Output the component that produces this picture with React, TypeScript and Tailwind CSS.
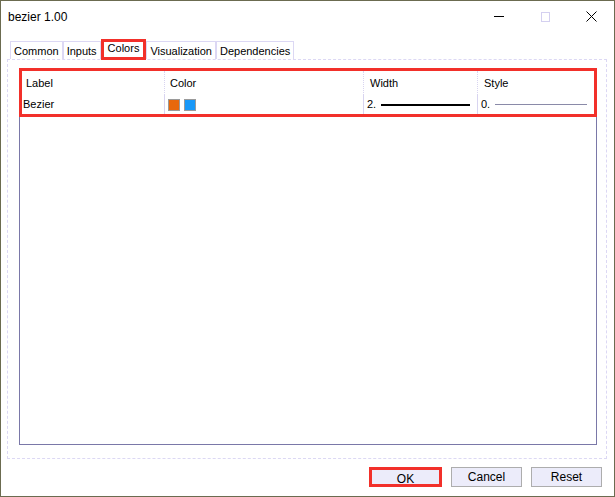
import { useState } from "react";

const tabs = ["Common", "Inputs", "Colors", "Visualization", "Dependencies"];

function TitleBar() {
  return (
    <div className="flex h-[31px] items-center pl-[7px] text-[12px] text-black">
      <span>bezier 1.00</span>
      <div className="ml-auto flex h-full items-center">
        <div className="flex w-[46px] justify-center">
          <div className="h-px w-[10px] bg-black" />
        </div>
        <div className="flex w-[46px] justify-center">
          <div className="h-[10px] w-[9px] border border-[#d4d0f0]" />
        </div>
        <div className="flex w-[46px] justify-center">
          <svg width="11" height="11" viewBox="0 0 11 11">
            <path d="M0.5 0.5 L10.5 10.5 M10.5 0.5 L0.5 10.5" stroke="#000" strokeWidth="1" />
          </svg>
        </div>
      </div>
    </div>
  );
}

function Tabs({ active, onPick }: { active: string; onPick: (t: string) => void }) {
  return (
    <div className="relative z-10 ml-[9px] flex h-[21px] items-end text-[11px]">
      {tabs.map((t) =>
        t === active ? (
          <button
            key={t}
            onClick={() => onPick(t)}
            className="-mb-px h-[21px] border-[3px] border-[#f2302a] bg-white px-[4px] pb-[3px] leading-[13px]"
          >
            {t}
          </button>
        ) : (
          <button
            key={t}
            onClick={() => onPick(t)}
            className="h-[18px] border border-b-0 border-[#dcd8f4] bg-white px-[3px] leading-[16px]"
          >
            {t}
          </button>
        )
      )}
    </div>
  );
}

function ColorsTable() {
  return (
    <div className="h-[376px] border border-[#7a78a8] bg-white">
      <div className="-mx-px -mt-[2px] border-[3px] border-[#f2302a]">
        <div className="flex h-[24px] items-center text-[11px]">
          <div className="w-[142px] pl-[4px]">Label</div>
          <div className="flex h-full w-[199px] items-center border-l border-dotted border-[#d8d4f0] pl-[5px]">Color</div>
          <div className="flex h-full w-[114px] items-center border-l border-dotted border-[#d8d4f0] pl-[6px]">Width</div>
          <div className="flex h-full flex-1 items-center border-l border-dotted border-[#d8d4f0] pl-[6px]">Style</div>
        </div>
        <div className="flex h-[19px] items-center text-[11px]">
          <div className="w-[142px] pl-[1px]">Bezier</div>
          <div className="flex h-full w-[199px] items-center gap-[4px] border-l border-[#d8d4f0] pl-[3px]">
            <span className="h-[12px] w-[12px] border border-[#9a9a9a] bg-[#e8680c]" />
            <span className="h-[12px] w-[12px] border border-[#9a9a9a] bg-[#1898f8]" />
          </div>
          <div className="flex h-full w-[114px] items-center border-l border-[#d8d4f0] pl-[3px]">
            <span>2.</span>
            <span className="ml-[5px] h-[2px] w-[89px] bg-black" />
          </div>
          <div className="flex h-full flex-1 items-center border-l border-[#d8d4f0] pl-[3px]">
            <span>0.</span>
            <span className="ml-[5px] h-px w-[92px] bg-[#8a8aa8]" />
          </div>
        </div>
      </div>
    </div>
  );
}

export default function App() {
  const [active, setActive] = useState("Colors");
  const btn = "h-[20px] w-[71px] border border-[#adadad] bg-[#ececfa] text-[12px]";

  return (
    <div
      className="flex h-[497px] w-[615px] flex-col border border-[#6b6b50] bg-white text-black"
      style={{ fontFamily: '"Liberation Sans", Arial, sans-serif' }}
    >
      <TitleBar />
      <div className="pt-[6px]">
        <Tabs active={active} onPick={setActive} />
      </div>
      <div className="ml-[6px] w-[600px] border border-dashed border-[#dcd8f4] pb-[13px] pl-[11px] pr-[9px] pt-[9px]">
        <ColorsTable />
      </div>
      <div className="flex justify-end gap-[9px] pr-[12px] pt-[8px]">
        <button className="h-[20px] w-[73px] border-[3px] border-[#f2302a] bg-[#ececfa] text-[12px]">OK</button>
        <button className={btn}>Cancel</button>
        <button className={btn}>Reset</button>
      </div>
    </div>
  );
}
